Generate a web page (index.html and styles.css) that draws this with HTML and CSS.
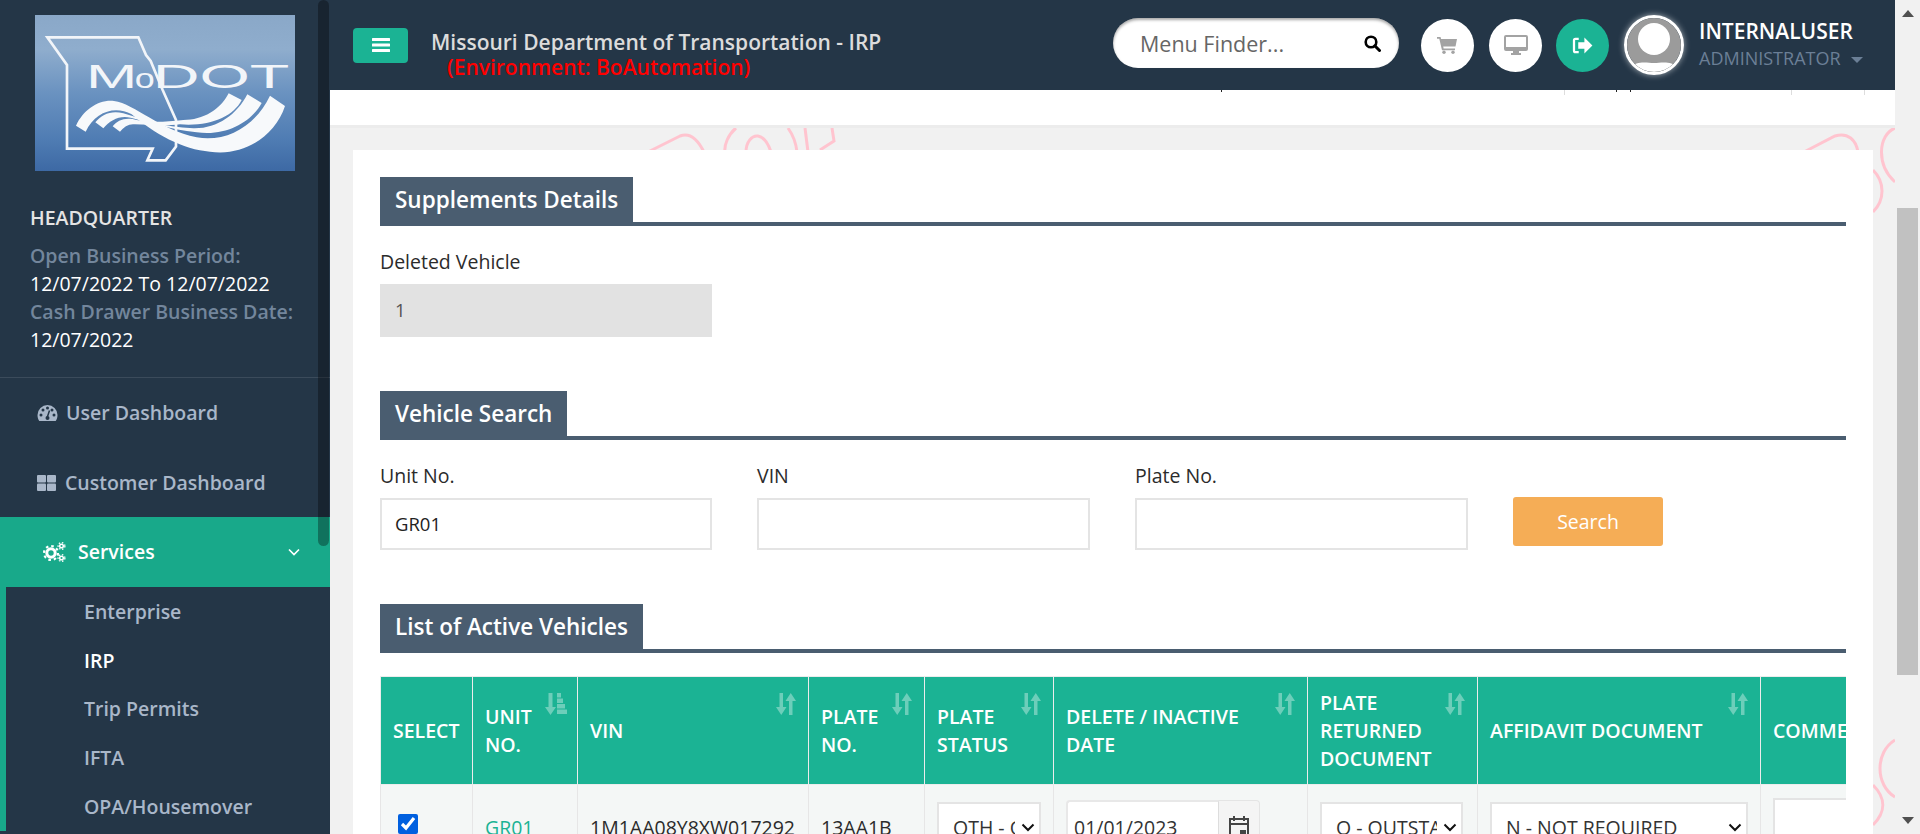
FILE: index.html
```html
<!DOCTYPE html>
<html lang="en">
<head>
<meta charset="utf-8">
<title>Missouri Department of Transportation - IRP</title>
<link rel="stylesheet" href="styles.css">
</head>
<body>
<div class="app">
  <aside class="sidebar">
    <div class="side-thumb"></div>
    <svg class="logo" viewBox="45 30 780 468" role="img" aria-label="MoDOT logo">
      <defs>
        <linearGradient id="logoBg" x1="0" y1="0" x2="0" y2="1">
          <stop offset="0" stop-color="#8aa8c8"/>
          <stop offset="0.22" stop-color="#8fadcd"/>
          <stop offset="0.5" stop-color="#6a92c0"/>
          <stop offset="0.8" stop-color="#4f7cb3"/>
          <stop offset="1" stop-color="#3d69a4"/>
        </linearGradient>
      </defs>
      <rect x="45" y="30" width="780" height="468" fill="url(#logoBg)"/>
      <path d="M82 97H355L378 150L392 168L428 255L468 345V425L437 466H382L398 431H141V180Z" fill="none" stroke="#f2f5f9" stroke-width="8"/>
      <text class="logo-text" y="248"><tspan x="198" font-size="100" textLength="154" lengthAdjust="spacingAndGlyphs">M</tspan><tspan x="344" font-size="82" textLength="60" lengthAdjust="spacingAndGlyphs">o</tspan><tspan x="398" font-size="100" textLength="410" lengthAdjust="spacingAndGlyphs">DOT</tspan></text>
      <path d="M168 362C190 315 235 283 282 288C345 297 420 375 530 397C620 412 705 365 750 272L795 303C765 395 670 455 570 440C490 435 400 385 335 328C285 300 225 320 197 380Z" fill="#f7f9fb"/>
      <path d="M226 352C245 328 275 315 310 325C360 340 430 368 520 370C590 372 650 330 682 268L725 294C695 350 620 395 530 382C450 372 385 352 332 338C300 330 270 345 250 370Z" fill="#f7f9fb"/>
      <path d="M278 364C292 345 318 335 350 345C385 352 430 352 490 345C550 345 600 315 626 265L665 285C640 335 570 365 480 358C430 365 385 358 345 358C328 355 312 365 300 380Z" fill="#f7f9fb"/>
    </svg>
    <div class="branch">
      <div class="branch-name">HEADQUARTER</div>
      <div class="branch-label">Open Business Period:</div>
      <div class="branch-value">12/07/2022 To 12/07/2022</div>
      <div class="branch-label">Cash Drawer Business Date:</div>
      <div class="branch-value">12/07/2022</div>
    </div>
    <nav class="menu">
      <a class="menu-item">
        <svg class="icon-gauge" viewBox="0 0 21 18"><path d="M10.500 1A10 10 0 0 0 .5 11c0 2.300.6 4.500 1.800 6h16.400c1.200-1.500 1.800-3.700 1.800-6A10 10 0 0 0 10.500 1z" fill="#a9b7c9"/><g fill="#243647"><circle cx="4" cy="11" r="1.500"/><circle cx="6" cy="6" r="1.500"/><circle cx="10.500" cy="4" r="1.500"/><circle cx="15" cy="6" r="1.500"/><circle cx="17" cy="11" r="1.500"/><circle cx="10.500" cy="14" r="2"/></g><path d="M10 14L12.500 6.500" stroke="#243647" stroke-width="1.500"/></svg>
        User Dashboard
      </a>
      <a class="menu-item">
        <svg class="icon-grid" viewBox="0 0 19 16"><g fill="#a9b7c9"><rect width="9" height="7.500" rx="1"/><rect x="10" width="9" height="7.500" rx="1"/><rect y="8.500" width="9" height="7.500" rx="1"/><rect x="10" y="8.500" width="9" height="7.500" rx="1"/></g></svg>
        Customer Dashboard
      </a>
      <a class="menu-item menu-active">
        <svg class="icon-cogs" viewBox="0 0 23 20"><g fill="none" stroke="#fff"><circle cx="8" cy="11" r="4.200" stroke-width="3"/><circle cx="8" cy="11" r="7" stroke-width="2.200" stroke-dasharray="2.600 2.900"/><circle cx="18.500" cy="4" r="1.800" stroke-width="1.500"/><circle cx="18.500" cy="4" r="3.400" stroke-width="1.300" stroke-dasharray="1.500 1.700"/><circle cx="18.500" cy="16" r="1.800" stroke-width="1.500"/><circle cx="18.500" cy="16" r="3.400" stroke-width="1.300" stroke-dasharray="1.500 1.700"/></g></svg>
        <span class="menu-label">Services</span>
        <svg class="icon-chevron" viewBox="0 0 12 8"><path d="M1 1.500L6 6.500L11 1.500" fill="none" stroke="#fff" stroke-width="1.700"/></svg>
      </a>
      <div class="submenu">
        <a class="sub-item">Enterprise</a>
        <a class="sub-item sub-current">IRP</a>
        <a class="sub-item">Trip Permits</a>
        <a class="sub-item">IFTA</a>
        <a class="sub-item">OPA/Housemover</a>
      </div>
    </nav>
  </aside>

  <div class="main">
    <svg class="doodle" viewBox="330 0 1565 834">
      <g fill="none" stroke="#ffc4cf" stroke-width="3">
        <path d="M648 152L680 136C690 132 698 140 704 152"/>
        <path d="M736 128C728 135 724 145 725 152M746 152C746 142 752 135 758 136C764 137 768 143 771 152M788 128C793 135 796 143 797 152M805 128L808 152M832 128L834 141L820 150"/>
        <path d="M1804 152L1835 136C1848 132 1856 140 1858 152"/>
        <path d="M1895 128C1878 135 1876 165 1895 182"/>
        <path d="M1873 170C1885 182 1885 200 1873 212"/>
        <path d="M1895 740C1875 752 1875 785 1895 797"/>
        <path d="M1873 785C1886 798 1886 812 1873 825"/>
      </g>
    </svg>
    <header class="topbar">
      <button class="menu-toggle" type="button" aria-label="Toggle menu">
        <svg viewBox="0 0 18 14"><g fill="#fff"><rect width="18" height="3" rx=".5"/><rect y="5.500" width="18" height="3" rx=".5"/><rect y="11" width="18" height="3" rx=".5"/></g></svg>
      </button>
      <div class="app-title">
        <div class="app-name">Missouri Department of Transportation - IRP</div>
        <div class="app-env">(Environment: BoAutomation)</div>
      </div>
      <div class="finder">
        <span class="finder-text">Menu Finder...</span>
        <svg class="finder-icon" viewBox="0 0 17 17"><circle cx="7" cy="7" r="5.300" fill="none" stroke="#000" stroke-width="2.600"/><path d="M10.800 10.800L15.500 15.500" stroke="#000" stroke-width="3" stroke-linecap="round"/></svg>
      </div>
      <div class="round-btn">
        <svg class="icon-cart" viewBox="0 0 20 18"><path d="M0 1h3.500l.6 2H20l-1.500 7.500H6.200l.4 2H18v1.700H5L2.300 2.800H0z" fill="#a3a3a3"/><circle cx="7" cy="16.300" r="1.700" fill="#a3a3a3"/><circle cx="16" cy="16.300" r="1.700" fill="#a3a3a3"/></svg>
      </div>
      <div class="round-btn">
        <svg class="icon-desktop" viewBox="0 0 24 20"><path d="M2 0h20a2 2 0 0 1 2 2v12a2 2 0 0 1-2 2h-7v2h2v2H7v-2h2v-2H2a2 2 0 0 1-2-2V2a2 2 0 0 1 2-2z" fill="#a3a3a3"/><rect x="2" y="2" width="20" height="10" fill="#fff"/></svg>
      </div>
      <div class="round-btn round-teal">
        <svg class="icon-signout" viewBox="0 0 22 18"><path d="M7 2H3.500A1.500 1.500 0 0 0 2 3.500v11A1.500 1.500 0 0 0 3.500 16H7" fill="none" stroke="#fff" stroke-width="2.400"/><path d="M6.500 5.500H13V.5L21.500 9L13 17.500v-5H6.500z" fill="#fff"/></svg>
      </div>
      <div class="avatar">
        <svg viewBox="0 0 54 54"><rect width="54" height="54" fill="#9b9b9b"/><circle cx="27" cy="21" r="16" fill="#fff"/><path d="M3 50C10 42 20 45 27 45C34 45 44 42 51 50V54H3Z" fill="#fff"/><path d="M7 46A28 28 0 0 0 47 46" fill="none" stroke="#9b9b9b"/></svg>
      </div>
      <div class="user">
        <div class="user-name">INTERNALUSER</div>
        <div class="user-role">ADMINISTRATOR <span class="caret"></span></div>
      </div>
    </header>

    <div class="strip">
      <i class="tick tick-a"></i><i class="tick tick-b"></i><i class="tick tick-c"></i>
      <i class="tick tick-light tick-d"></i><i class="tick tick-light tick-e"></i><i class="tick tick-light tick-f"></i>
    </div>

    <div class="content">
      <section class="card">
        <div class="section-head"><h2>Supplements Details</h2></div>
        <label class="field-label">Deleted Vehicle</label>
        <input class="field field-readonly" type="text" value="1" readonly>

        <div class="section-head section-next"><h2>Vehicle Search</h2></div>
        <div class="search-grid">
          <div>
            <label class="field-label">Unit No.</label>
            <input class="field" type="text" value="GR01">
          </div>
          <div>
            <label class="field-label">VIN</label>
            <input class="field" type="text">
          </div>
          <div>
            <label class="field-label">Plate No.</label>
            <input class="field" type="text">
          </div>
          <button class="search-btn" type="button">Search</button>
        </div>

        <div class="section-head section-next"><h2>List of Active Vehicles</h2></div>
        <div class="table-wrap">
          <table class="vehicles">
            <colgroup>
              <col class="c1"><col class="c2"><col class="c3"><col class="c4"><col class="c5"><col class="c6"><col class="c7"><col class="c8"><col class="c9">
            </colgroup>
            <thead>
              <tr>
                <th>SELECT</th>
                <th>UNIT<br>NO.<svg class="sort sort-amount" viewBox="0 0 22 22"><path d="M3.500 0h4v14H11l-5.500 8L0 14h3.500z"/><path d="M12 0h4v4.500h-4zM12 5.500h6V10h-6zM12 11h8v4.500h-8zM12 16.500h10V21H12z"/></svg></th>
                <th>VIN<svg class="sort" viewBox="0 0 20 22"><use href="#sortArrows"/></svg></th>
                <th>PLATE<br>NO.<svg class="sort" viewBox="0 0 20 22"><use href="#sortArrows"/></svg></th>
                <th>PLATE<br>STATUS<svg class="sort" viewBox="0 0 20 22"><use href="#sortArrows"/></svg></th>
                <th>DELETE / INACTIVE<br>DATE<svg class="sort" viewBox="0 0 20 22"><use href="#sortArrows"/></svg></th>
                <th>PLATE<br>RETURNED<br>DOCUMENT<svg class="sort" viewBox="0 0 20 22"><use href="#sortArrows"/></svg></th>
                <th>AFFIDAVIT DOCUMENT<svg class="sort" viewBox="0 0 20 22"><use href="#sortArrows"/></svg></th>
                <th>COMMENTS</th>
              </tr>
            </thead>
            <tbody>
              <tr>
                <td class="cell-check"><input class="row-check" type="checkbox" checked></td>
                <td><a class="unit-link">GR01</a></td>
                <td>1M1AA08Y8XW017292</td>
                <td>13AA1B</td>
                <td class="cell-ctl"><select class="ctl ctl-status"><option>OTH - OTHER</option></select></td>
                <td class="cell-ctl">
                  <div class="date-group">
                    <input class="date-input" type="text" value="01/01/2023">
                    <span class="date-addon">
                      <svg viewBox="0 0 20 24"><path d="M1 4h18v19H1zM1 9h18M5 1v5M15 1v5" fill="none" stroke="#444" stroke-width="2"/><rect x="11" y="15" width="6" height="6" fill="#444"/></svg>
                    </span>
                  </div>
                </td>
                <td class="cell-ctl"><select class="ctl ctl-return"><option>O - OUTSTANDING</option></select></td>
                <td class="cell-ctl"><select class="ctl ctl-affidavit"><option>N - NOT REQUIRED</option></select></td>
                <td class="cell-ctl"><input class="comment" type="text"></td>
              </tr>
            </tbody>
          </table>
        </div>
      </section>
    </div>
  </div>

  <div class="scrollbar">
    <span class="arrow-up"></span>
    <span class="thumb"></span>
    <span class="arrow-down"></span>
  </div>
</div>
<svg class="defs" width="0" height="0"><defs><g id="sortArrows"><path d="M3.500 0h3.500v14h3.500L5.250 22L0 14h3.500z"/><path d="M13 22h3.500V8H20L14.750 0L9.500 8H13z"/></g></defs></svg>
</body>
</html>
```

FILE: styles.css
```css
* { box-sizing: border-box; }
html, body { margin: 0; height: 100%; overflow: hidden; }
body { font-family: "Open Sans", "Liberation Sans", sans-serif; font-size: 19.5px; color: #2b2b2b; background: #f1f1f1; }
.defs { position: absolute; }
.app { display: flex; height: 834px; overflow: hidden; }

/* Sidebar */
.sidebar { position: relative; flex: 0 0 330px; background: #243647; overflow: hidden; }
.side-thumb { position: absolute; right: 1px; top: 0; width: 11px; height: 546px; border-radius: 6px; background: rgba(0, 0, 0, .32); }
.logo { display: block; width: 260px; height: 156px; margin: 15px 0 0 35px; }
.logo-text { fill: #f2f5f9; font-family: "Liberation Sans", sans-serif; }
.branch { margin-top: 33px; padding: 0 0 23px 30px; border-bottom: 1px solid #3b4b5b; line-height: 28px; font-size: 19.5px; white-space: nowrap; }
.branch-name { color: #e4e4e4; font-weight: 600; margin-bottom: 10px; }
.branch-label { color: #73869c; font-weight: 600; }
.branch-value { color: #fff; }
.menu-item { display: flex; align-items: center; height: 69.7px; padding-left: 37px; color: #a9b7c9; font-size: 19.500px; font-weight: 600; }
.icon-gauge { width: 21px; height: 18px; margin-right: 8px; }
.icon-grid { width: 19px; height: 16px; margin-right: 9px; }
.menu-active { background: #18a98a; color: #fff; padding-left: 43px; padding-bottom: 1px; }
.icon-cogs { width: 23px; height: 20px; margin-right: 12px; }
.menu-label { flex: 1; }
.icon-chevron { width: 12px; height: 8px; margin-right: 30px; }
.submenu { border-left: 6px solid #18a98a; }
.sub-item { display: flex; align-items: center; height: 48.7px; padding-left: 78px; color: #a9b7c9; font-size: 19.500px; font-weight: 600; }
.sub-current { color: #fff; }

/* Main */
.main { position: relative; flex: 1; min-width: 0; overflow: hidden; }
.doodle { position: absolute; left: 0; top: 0; width: 1565px; height: 834px; }
.topbar { position: relative; display: flex; align-items: center; height: 90px; padding-left: 23px; background: #243647; }
.menu-toggle { display: flex; align-items: center; justify-content: center; width: 55px; height: 35px; padding: 0; border: 0; border-radius: 4px; background: #1bb394; }
.menu-toggle svg { width: 18px; height: 14px; }
.app-title { align-self: flex-start; margin-left: 23px; padding-top: 29px; font-size: 21px; font-weight: 600; line-height: 26px; white-space: nowrap; }
.app-name { color: #dcdcdc; }
.app-env { color: #f00; padding-left: 16px; margin-top: -1px; }
.finder { display: flex; align-items: center; justify-content: space-between; width: 286px; height: 50px; margin-left: auto; margin-bottom: 4px; padding: 0 18px 0 27px; border-radius: 25px; background: #fff; box-shadow: inset 0 2px 3px rgba(0, 0, 0, .35); }
.finder-text { color: #666; font-size: 21.500px; }
.finder-icon { width: 17px; height: 17px; }
.round-btn { display: flex; align-items: center; justify-content: center; flex: 0 0 53px; height: 53px; margin-left: 15px; border-radius: 50%; background: #fff; }
.finder + .round-btn { margin-left: 22px; }
.round-teal { background: #1bb394; margin-left: 14px; }
.icon-cart { width: 20px; height: 18px; margin-right: 2px; }
.icon-desktop { width: 24px; height: 20px; }
.icon-signout { width: 21px; height: 17px; }
.avatar { flex: 0 0 60px; height: 60px; margin-left: 15px; border: 3px solid #fff; border-radius: 50%; overflow: hidden; box-shadow: 0 0 6px rgba(255, 255, 255, .6); }
.avatar svg { display: block; width: 54px; height: 54px; }
.user { flex: 0 0 211px; padding-left: 15px; margin-bottom: 2px; white-space: nowrap; }
.user-name { color: #fff; font-size: 21px; font-weight: 600; line-height: 28px; }
.user-role { color: #6b7f96; font-size: 18px; line-height: 26px; }
.caret { display: inline-block; margin-left: 6px; vertical-align: middle; border: 6px solid transparent; border-top-color: #6b7f96; border-bottom: 0; }

.strip { position: relative; height: 38px; background: #fff; border-bottom: 3px solid #ececec; }
.tick { position: absolute; top: 0; width: 1px; height: 2px; background: #222; }
.tick-light { height: 5px; background: #ddd; }
.tick-a { left: 891px; }
.tick-b { left: 1286px; }
.tick-c { left: 1300px; }
.tick-d { left: 1234px; }
.tick-e { left: 1461px; }
.tick-f { left: 1534px; }

.content { position: relative; padding: 22px 22px 0 23px; }
.card { padding: 27px 27px 0; background: #fff; height: 700px; }
.section-head { border-bottom: 4px solid #4a5d70; margin-bottom: 24px; }
.section-head h2 { display: inline-block; margin: 0; padding: 0 15px; height: 45px; vertical-align: bottom; background: #4a5d70; color: #fff; font-size: 22.500px; font-weight: 600; line-height: 46px; }
.section-next { margin-top: 54px; }
.field-label { display: block; height: 24px; margin-bottom: 10px; font-size: 19.500px; line-height: 24px; color: #2b2b2b; }
.field { display: block; width: 332px; height: 52px; padding: 0 13px 2px; border: 2px solid #e4e4e4; background: #fff; font: 18.500px "Open Sans", sans-serif; color: #222; outline: 0; }
.field-readonly { height: 53px; background: #e2e2e2; border-color: #e2e2e2; color: #555; }
.search-grid { display: grid; grid-template-columns: 332px 333px 333px 150px; column-gap: 45px; align-items: end; }
.search-grid .field { width: 100%; }
.search-btn { height: 49px; margin-bottom: 4px; border: 0; border-radius: 3px; background: #f5ad56; color: #fff; font: 19.500px "Open Sans", sans-serif; }

.table-wrap { overflow: hidden; margin-top: -1px; }
.vehicles { width: 1580px; table-layout: fixed; border-collapse: collapse; }
.c1 { width: 92px; } .c2 { width: 105px; } .c3 { width: 231px; } .c4 { width: 116px; } .c5 { width: 129px; }
.c6 { width: 254px; } .c7 { width: 170px; } .c8 { width: 283px; } .c9 { width: 200px; }
.vehicles th { position: relative; height: 108px; padding: 0 12px; background: #1bb394; border: 1px solid #ececec; color: #fff; font-size: 19.500px; font-weight: 600; line-height: 28px; text-align: left; vertical-align: middle; white-space: nowrap; overflow: hidden; }
.vehicles td { height: 85px; padding: 0 12px; background: #f4f7f6; border: 1px solid #e6e6e6; font-size: 19.500px; vertical-align: middle; white-space: nowrap; }
.sort { position: absolute; top: 16px; right: 12px; width: 20px; height: 22px; fill: rgba(255, 255, 255, .36); }
.sort-amount { right: 10px; width: 22px; }
.vehicles .cell-check { padding-left: 17px; }
.row-check { display: block; width: 20px; height: 20px; margin: 0 0 6px; accent-color: #0060df; }
.unit-link { color: #1bb394; }
.ctl { display: block; height: 50px; padding: 0 24px 0 14px; border: 2px solid #e4e4e4; border-radius: 0; background: #fff url("data:image/svg+xml,%3Csvg xmlns='http://www.w3.org/2000/svg' width='14' height='9' viewBox='0 0 14 9'%3E%3Cpath d='M1.500 1.500L7 7L12.500 1.500' fill='none' stroke='%23111' stroke-width='2'/%3E%3C/svg%3E") no-repeat right 4px center; font: 19.500px "Open Sans", sans-serif; color: #333; appearance: none; }
.ctl-status { width: 104px; }
.ctl-return { width: 143px; }
.ctl-affidavit { width: 258px; }
.date-group { display: flex; height: 54px; }
.date-input { flex: 0 0 153px; width: 153px; min-width: 0; padding: 0 6px; border: 2px solid #e8e8e8; border-right: 1px solid #ddd; border-radius: 4px 0 0 4px; font: 19.500px "Open Sans", sans-serif; color: #333; }
.date-addon { display: flex; align-items: center; justify-content: center; flex: 0 0 41px; background: #f4f4f4; border: 1px solid #e4e4e4; border-left: 0; border-radius: 0 4px 4px 0; }
.date-addon svg { width: 20px; height: 24px; }
.comment { display: block; width: 176px; height: 58px; border: 2px solid #e4e4e4; background: #fff; }

/* Page scrollbar */
.scrollbar { display: flex; flex-direction: column; align-items: center; flex: 0 0 25px; background: #f1f1f1; }
.arrow-up { margin-top: 10px; border: 6px solid transparent; border-top: 0; border-bottom: 7px solid #505050; }
.thumb { width: 21px; height: 467px; margin-top: 191px; margin-left: -1px; background: #c1c1c1; }
.arrow-down { margin-top: auto; margin-bottom: 10px; border: 6px solid transparent; border-bottom: 0; border-top: 7px solid #505050; }
```
